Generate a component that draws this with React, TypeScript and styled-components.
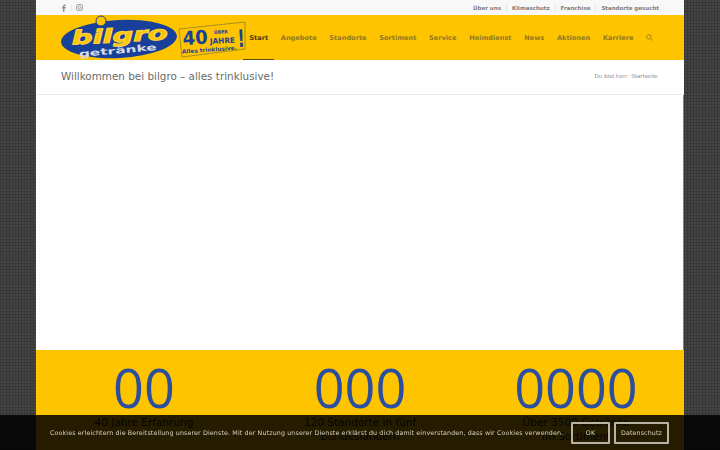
import React from "react";
import styled, { createGlobalStyle } from "styled-components";

const Global = createGlobalStyle`
  html, body { margin: 0; padding: 0; height: 100%; overflow: hidden; }
  body {
    font-family: "DejaVu Sans", Verdana, sans-serif;
    background-color: #444444;
    background-image:
      repeating-linear-gradient(0deg, rgba(0,0,0,.14) 0 1px, transparent 1px 3px),
      repeating-linear-gradient(90deg, rgba(0,0,0,.14) 0 1px, transparent 1px 3px);
  }
`;

const Page = styled.div`
  position: relative;
  width: 720px;
  height: 450px;
  overflow: hidden;
`;

const Wrap = styled.div`
  width: 648px;
  height: 450px;
  margin: 0 auto;
  display: flex;
  flex-direction: column;
  background: #fff;
  opacity: 0.999;
`;

const TopBar = styled.div`
  height: 15px;
  background: #f8f8f8;
  display: flex;
  align-items: center;
  justify-content: space-between;
  padding: 0 20px 0 20px;
  flex: none;
`;

const Socials = styled.div`
  display: flex;
  align-items: center;
  color: #8a8a8a;
`;

const SocialCell = styled.span`
  width: 15px;
  display: flex;
  justify-content: center;
  & + & { border-left: 1px solid #e6e6e6; }
`;

const TopLinks = styled.nav`
  display: flex;
  align-items: center;
  font-size: 5.5px;
  font-weight: 700;
  color: #7e7e7e;
`;

const TopLink = styled.span`
  padding: 0 5px;
  line-height: 8px;
  & + & { border-left: 1px solid #e4e4e4; }
`;

const Header = styled.header`
  height: 45px;
  flex: none;
  background: #ffc400;
  display: flex;
  align-items: stretch;
  padding-left: 24px;
`;

const Logo = styled.svg`
  width: 186px;
  height: 45px;
  flex: none;
`;

const Menu = styled.nav`
  display: flex;
  align-items: stretch;
  margin-left: -3px;
  font-size: 6.6px;
  font-weight: 700;
  color: #8f7a22;
`;

const MenuItem = styled.span<{ $active?: boolean }>`
  display: flex;
  align-items: center;
  padding: 1px 6.35px 0;
  box-sizing: border-box;
  height: 45px;
  color: ${(p) => (p.$active ? "#4a3d05" : "#8f7a22")};
  border-bottom: 1px solid ${(p) => (p.$active ? "#5c4f10" : "transparent")};
`;

const TitleBar = styled.div`
  height: 35px;
  flex: none;
  box-sizing: border-box;
  background: #fff;
  border-bottom: 1px solid #e8e8e8;
  display: flex;
  align-items: center;
  justify-content: space-between;
  padding: 0 26px 3px 25px;
`;

const Title = styled.h1`
  margin: 0;
  font-size: 10.4px;
  font-weight: 400;
  color: #6a6a6a;
`;

const Crumbs = styled.div`
  display: flex;
  gap: 3px;
  font-size: 5.5px;
  color: #8d8d8d;
`;

const Main = styled.main`
  flex: none;
  height: 255px;
  background: #fff;
  border-right: 1px solid #35b35a;
`;

const Stats = styled.section`
  flex: 1;
  background: #ffc400;
  display: grid;
  grid-template-columns: repeat(3, 1fr);
`;

const Stat = styled.div`
  text-align: center;
  padding-top: 9px;
`;

const Count = styled.div`
  font-family: "Open Sans", sans-serif;
  font-size: 54px;
  line-height: 56px;
  color: #2b4f9e;
`;

const Label = styled.div`
  font-size: 10.5px;
  line-height: 14px;
  color: #1c1c1c;
`;

const Cookie = styled.div`
  position: absolute;
  left: 0;
  right: 0;
  bottom: 0;
  height: 35px;
  box-sizing: border-box;
  padding-left: 50px;
  background: rgba(0, 0, 0, 0.85);
  display: flex;
  align-items: center;
  gap: 4px;
  color: #d4cfc0;
  font-size: 6.34px;
  letter-spacing: 0.02em;
  will-change: transform;
`;

const CookieText = styled.span`
  width: 514px;
  margin-right: 3px;
  white-space: nowrap;
`;

const CookieButton = styled.span<{ $wide?: boolean }>`
  box-sizing: border-box;
  height: 22px;
  width: ${(p) => (p.$wide ? "55px" : "39px")};
  border: 2px solid #b8b3a5;
  border-radius: 1px;
  display: flex;
  align-items: center;
  justify-content: center;
`;

const F = "'DejaVu Sans', sans-serif";

export default function App() {
  return (
    <Page>
      <Global />
      <Wrap>
        <TopBar>
          <Socials>
            <SocialCell>
              <svg width="7" height="8" viewBox="0 0 7 8" fill="currentColor"><path d="M4.4 8V4.4h1.1l.2-1.3H4.4v-.8c0-.4.1-.6.6-.6h.7V.5C5.5.5 5.2.4 4.8.4c-1 0-1.7.6-1.7 1.7v1H2v1.3h1.1V8z" /></svg>
            </SocialCell>
            <SocialCell>
              <svg width="7" height="7" viewBox="0 0 7 7" fill="none" stroke="currentColor" strokeWidth="0.8"><rect x="0.6" y="0.6" width="5.8" height="5.8" rx="1.2" /><circle cx="3.5" cy="3.5" r="1.3" /></svg>
            </SocialCell>
          </Socials>
          <TopLinks>
            <TopLink>Über uns</TopLink>
            <TopLink>Klimaschutz</TopLink>
            <TopLink>Franchise</TopLink>
            <TopLink>Standorte gesucht</TopLink>
          </TopLinks>
        </TopBar>
        <Header>
          <Logo viewBox="0 0 186 45">
            <ellipse cx="59" cy="24" rx="58" ry="19" fill="#18409a" transform="rotate(-3 59 24)" />
            <circle cx="41" cy="6" r="5" fill="#ffc400" stroke="#18409a" strokeWidth="1" />
            <text x="60" y="27" textAnchor="middle" fontFamily={F} fontSize="19" fontWeight="700" fontStyle="italic" fill="#ffc400" stroke="#ffd23a" strokeWidth="1" textLength="96" lengthAdjust="spacingAndGlyphs" transform="rotate(-3 60 27)">bilgro</text>
            <text x="58" y="38.5" textAnchor="middle" fontFamily={F} fontSize="9" fontWeight="700" fill="#d6dbe6" textLength="78" lengthAdjust="spacingAndGlyphs" transform="rotate(-5 58 38.5)">getränke</text>
            <path d="M119 14 L185 7 L185 34 L122 42 Z" fill="none" stroke="#6b6a30" strokeWidth="0.6" />
            <text x="123" y="30" fontFamily={F} fontSize="19" fontWeight="700" fill="#18409a" transform="rotate(-3 123 30)" textLength="25" lengthAdjust="spacingAndGlyphs">40</text>
            <text x="154" y="19" fontFamily={F} fontSize="4.6" fontWeight="700" fill="#18409a" transform="rotate(-3 154 19)">ÜBER</text>
            <text x="150" y="29" fontFamily={F} fontSize="7.6" fontWeight="700" fill="#18409a" transform="rotate(-3 150 29)" textLength="25" lengthAdjust="spacingAndGlyphs">JAHRE</text>
            <text x="178" y="32" fontFamily={F} fontSize="24" fontWeight="700" fill="#18409a" transform="rotate(-3 178 32)" textLength="7" lengthAdjust="spacingAndGlyphs">!</text>
            <text x="122" y="38.5" fontFamily={F} fontSize="5.4" fontWeight="700" fill="#18409a" transform="rotate(-4 122 38.5)" textLength="55" lengthAdjust="spacingAndGlyphs">Alles trinklusive.</text>
          </Logo>
          <Menu>
            <MenuItem $active>Start</MenuItem>
            <MenuItem>Angebote</MenuItem>
            <MenuItem>Standorte</MenuItem>
            <MenuItem>Sortiment</MenuItem>
            <MenuItem>Service</MenuItem>
            <MenuItem>Heimdienst</MenuItem>
            <MenuItem>News</MenuItem>
            <MenuItem>Aktionen</MenuItem>
            <MenuItem>Karriere</MenuItem>
            <MenuItem>
              <svg width="7" height="7" viewBox="0 0 8 8" fill="none" stroke="currentColor" strokeWidth="1"><circle cx="3.3" cy="3.3" r="2.5" /><path d="M5.2 5.2 7.5 7.5" /></svg>
            </MenuItem>
          </Menu>
        </Header>
        <TitleBar>
          <Title>Willkommen bei bilgro – alles trinklusive!</Title>
          <Crumbs>
            <span>Du bist hier:</span>
            <span>Startseite</span>
          </Crumbs>
        </TitleBar>
        <Main />
        <Stats>
          <Stat>
            <Count>00</Count>
            <Label>40 Jahre Erfahrung</Label>
          </Stat>
          <Stat>
            <Count>000</Count>
            <Label>120 Standorte in fünf</Label>
            <Label>Bundesländern</Label>
          </Stat>
          <Stat>
            <Count>0000</Count>
            <Label>Über 3500 Getränke</Label>
            <Label>im Sortiment</Label>
          </Stat>
        </Stats>
      </Wrap>
      <Cookie>
        <CookieText>Cookies erleichtern die Bereitstellung unserer Dienste. Mit der Nutzung unserer Dienste erklärst du dich damit einverstanden, dass wir Cookies verwenden.</CookieText>
        <CookieButton>OK</CookieButton>
        <CookieButton $wide>Datenschutz</CookieButton>
      </Cookie>
    </Page>
  );
}
